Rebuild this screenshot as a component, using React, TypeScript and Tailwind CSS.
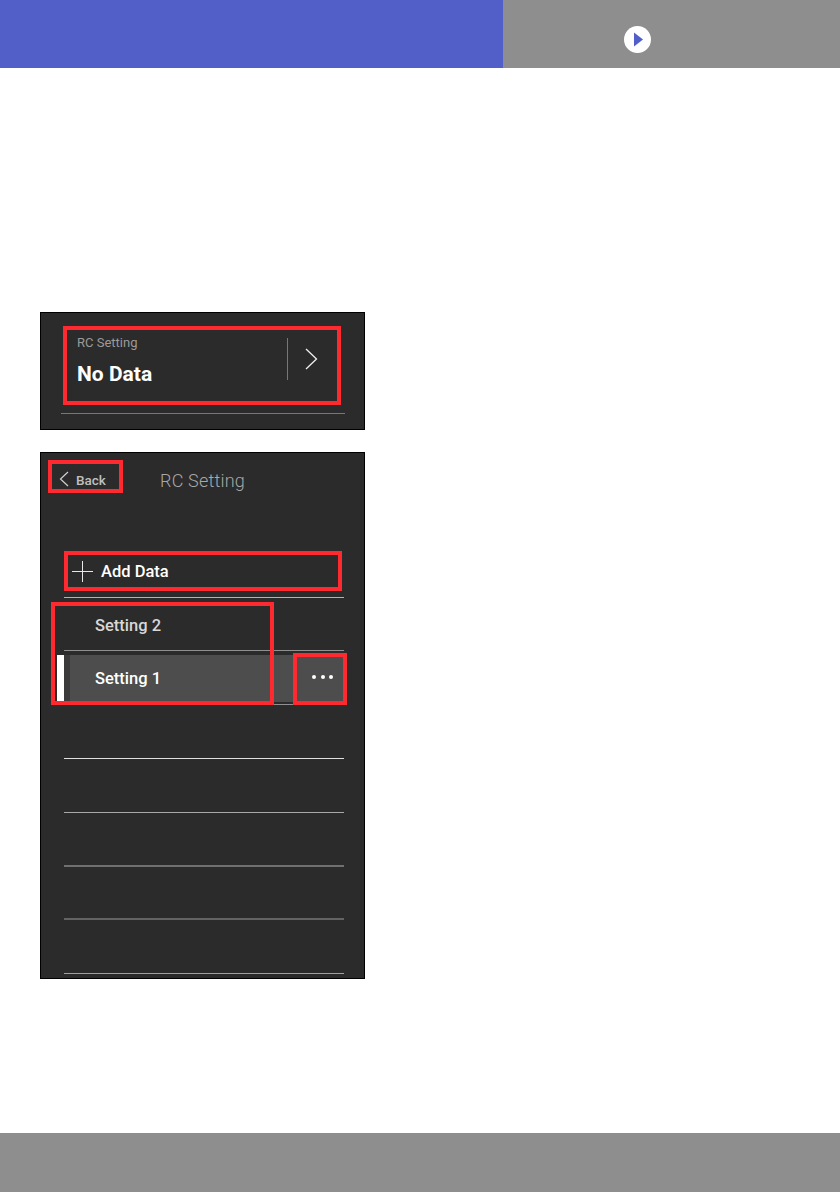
import React from "react";

const RedBox = ({ className }: { className: string }) => (
  <div className={`absolute border-[4px] border-[#ff2a2f] ${className}`} />
);

const lineRows = [
  { h: "h-[54px]", c: "border-b border-[#e0e0e0]" },
  { h: "h-[54px]", c: "border-b border-[#a8a8a8]" },
  { h: "h-[54px]", c: "border-b-2 border-[#707070]" },
  { h: "h-[53px]", c: "border-b-2 border-[#636363]" },
  { h: "h-[54px]", c: "border-b border-[#a0a0a0]" },
];

export default function App() {
  return (
    <div className="w-[840px] h-[1192px] bg-white flex flex-col overflow-hidden font-['Roboto',sans-serif]">
      <header className="h-[68px] flex shrink-0">
        <div className="w-[503px] bg-[#525fc9]" />
        <div className="flex-1 bg-[#8e8e8e] pl-[121px] pt-[26px]">
          <div className="w-[27px] h-[27px] rounded-full bg-white flex items-center justify-center">
            <svg width="27" height="27" viewBox="0 0 27 27">
              <path d="M10 6.5 L19 13.5 L10 20.5 Z" fill="#525fc9" />
            </svg>
          </div>
        </div>
      </header>

      <main className="flex-1 pl-[40px] pt-[244px]">
        {/* Summary panel */}
        <section className="relative w-[325px] h-[118px] bg-[#2b2b2b] border border-black">
          <div className="h-[101px] ml-[20px] w-[284px] border-b border-[#777777] flex">
            <div className="flex-1 pl-[16px] pt-[22px]">
              <div className="text-[13px] leading-[16px] text-[#9a9a9a]">RC Setting</div>
              <div className="mt-[10px] text-[21px] leading-[26px] font-bold text-white">No Data</div>
            </div>
            <div className="w-[58px] mt-[25px] h-[42px] border-l border-[#777777] flex items-start pl-[17px] pt-[10px]">
              <svg width="13" height="22" viewBox="0 0 13 22" fill="none" stroke="#f0f0f0" strokeWidth="1.3">
                <path d="M1 1 L11.5 11 L1 21" />
              </svg>
            </div>
          </div>
          <RedBox className="left-[22px] top-[13px] w-[278px] h-[79px]" />
        </section>

        {/* RC Setting list panel */}
        <section className="relative mt-[22px] w-[325px] h-[527px] bg-[#2b2b2b] border border-black">
          <div className="h-[40px] flex items-end">
            <div className="w-[119px] pl-[18px] flex items-center gap-[7px] h-[24px] mb-[2px]">
              <svg width="10" height="16" viewBox="0 0 10 16" fill="none" stroke="#d0d0d0" strokeWidth="1.2">
                <path d="M9 1 L1.5 8 L9 15" />
              </svg>
              <span className="text-[13.5px] font-medium text-[#c0c0c0] mt-[2px]">Back</span>
            </div>
            <div className="text-[18px] leading-[24px] font-light text-[#a8a8a8] tracking-[0.2px]">RC Setting</div>
          </div>

          <div className="mt-[55px] ml-[23px] w-[280px] h-[50px] border-b border-[#b4b4b4] pl-[8px] pb-[2px] flex items-center gap-[8px]">
            <svg width="21" height="21" viewBox="0 0 21 21" stroke="#e8e8e8" strokeWidth="1">
              <path d="M0 10.5 H21 M10.5 0 V21" />
            </svg>
            <span className="text-[16.5px] leading-[22px] font-medium text-white">Add Data</span>
          </div>

          <div className="ml-[23px] w-[280px] h-[53px] border-b border-[#909090] flex items-center pl-[31px] pt-[3px] text-[16.5px] leading-[22px] font-medium text-[#d8d8d8]">
            Setting 2
          </div>

          <div className="relative ml-[23px] w-[280px] h-[54px] border-b border-[#909090] flex items-end pb-[2px]">
            <div className="absolute left-[-7px] top-[4px] w-[7px] h-[47px] bg-white" />
            <div className="w-[6px] h-[47px] bg-[#3a3a3a] shrink-0" />
            <div className="flex-1 h-[47px] bg-[#4d4d4d] flex items-center pl-[25px] pt-[1px] text-[16.5px] leading-[22px] font-medium text-white">
              Setting 1
            </div>
            <div className="absolute right-[11px] top-[24px] flex gap-[4.5px]">
              <span className="w-[4px] h-[4px] rounded-full bg-white" />
              <span className="w-[4px] h-[4px] rounded-full bg-white" />
              <span className="w-[4px] h-[4px] rounded-full bg-white" />
            </div>
          </div>

          {lineRows.map((r, i) => (
            <div key={i} className={`ml-[23px] w-[280px] ${r.h} ${r.c}`} />
          ))}

          <RedBox className="left-[7px] top-[7px] w-[75px] h-[33px]" />
          <RedBox className="left-[23px] top-[98px] w-[278px] h-[40px]" />
          <RedBox className="left-[10px] top-[149px] w-[223px] h-[103px]" />
          <RedBox className="left-[252px] top-[200px] w-[54px] h-[52px]" />
        </section>
      </main>

      <footer className="h-[59px] shrink-0 bg-[#8e8e8e]" />
    </div>
  );
}
